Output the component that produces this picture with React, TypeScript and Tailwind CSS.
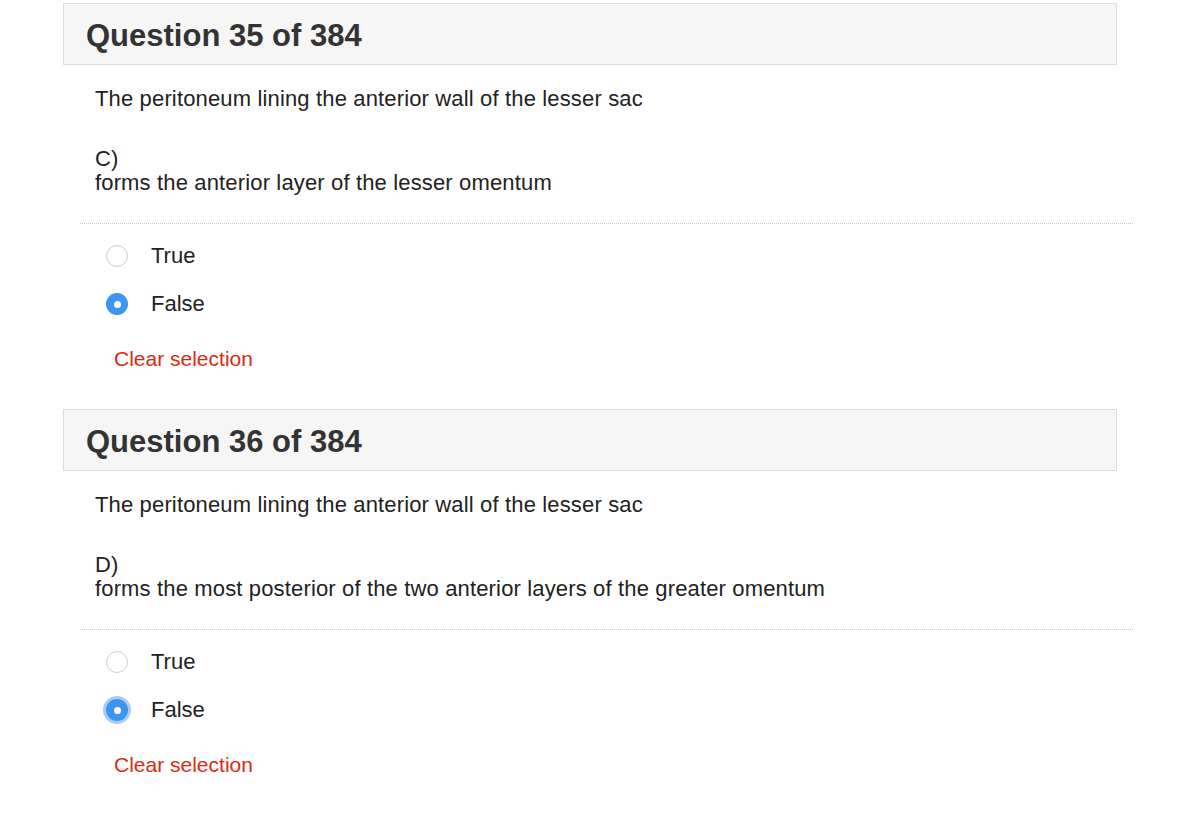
import React from 'react';

const questions = [
  {
    id: 35,
    stem: 'The peritoneum lining the anterior wall of the lesser sac',
    letter: 'C)',
    option: 'forms the anterior layer of the lesser omentum',
    focused: false,
  },
  {
    id: 36,
    stem: 'The peritoneum lining the anterior wall of the lesser sac',
    letter: 'D)',
    option: 'forms the most posterior of the two anterior layers of the greater omentum',
    focused: true,
  },
];

const Radio: React.FC<{ checked: boolean; focused?: boolean }> = ({ checked, focused }) =>
  checked ? (
    <span
      className={`w-[22px] h-[22px] rounded-full bg-[#3c95f2] flex items-center justify-center ${
        focused ? 'ring-[3px] ring-[#a9cdf7]' : ''
      }`}
    >
      <span className="w-[7px] h-[7px] rounded-full bg-white"></span>
    </span>
  ) : (
    <span className="w-[22px] h-[22px] rounded-full bg-white border-[1.5px] border-[#cfcfcf]"></span>
  );

const App: React.FC = () => {
  return (
    <div
      className="bg-white min-h-[828px] pt-[3px] text-[#222]"
      style={{ fontFamily: '"Liberation Sans", Arial, Helvetica, sans-serif' }}
    >
      <div className="ml-[63px] w-[1070px]">
        {questions.map((q) => (
          <div key={q.id} className="mb-[38px]">
            {/* Header */}
            <div className="w-[1054px] h-[62px] border border-[#dcdcdc] bg-[#f6f6f6] flex items-center pl-[22px] pt-[3px]">
              <h2 className="text-[31px] leading-[36px] font-bold text-[#333]">
                Question {q.id} of 384
              </h2>
            </div>

            <div className="pl-[32px] pt-[22px] text-[22px] leading-[24px] tracking-[0.15px]">
              <p>{q.stem}</p>
              <p className="mt-[36px]">{q.letter}</p>
              <p>{q.option}</p>
            </div>

            <div className="ml-[17px] mt-[28px] border-t border-dotted border-[#c8c8c8]"></div>

            <div className="pl-[43px] pt-[20px]">
              <label className="flex items-center h-[24px]">
                <Radio checked={false} />
                <span className="ml-[23px] text-[22px] leading-[24px] text-[#222]">True</span>
              </label>
              <label className="flex items-center h-[24px] mt-[24px]">
                <Radio checked={true} focused={q.focused} />
                <span className="ml-[23px] text-[22px] leading-[24px] text-[#222]">False</span>
              </label>
            </div>

            <div className="pl-[51px] mt-[31px] text-[21px] leading-[24px] text-[#dc2a10]">
              Clear selection
            </div>
          </div>
        ))}
      </div>
    </div>
  );
};

export default App;
